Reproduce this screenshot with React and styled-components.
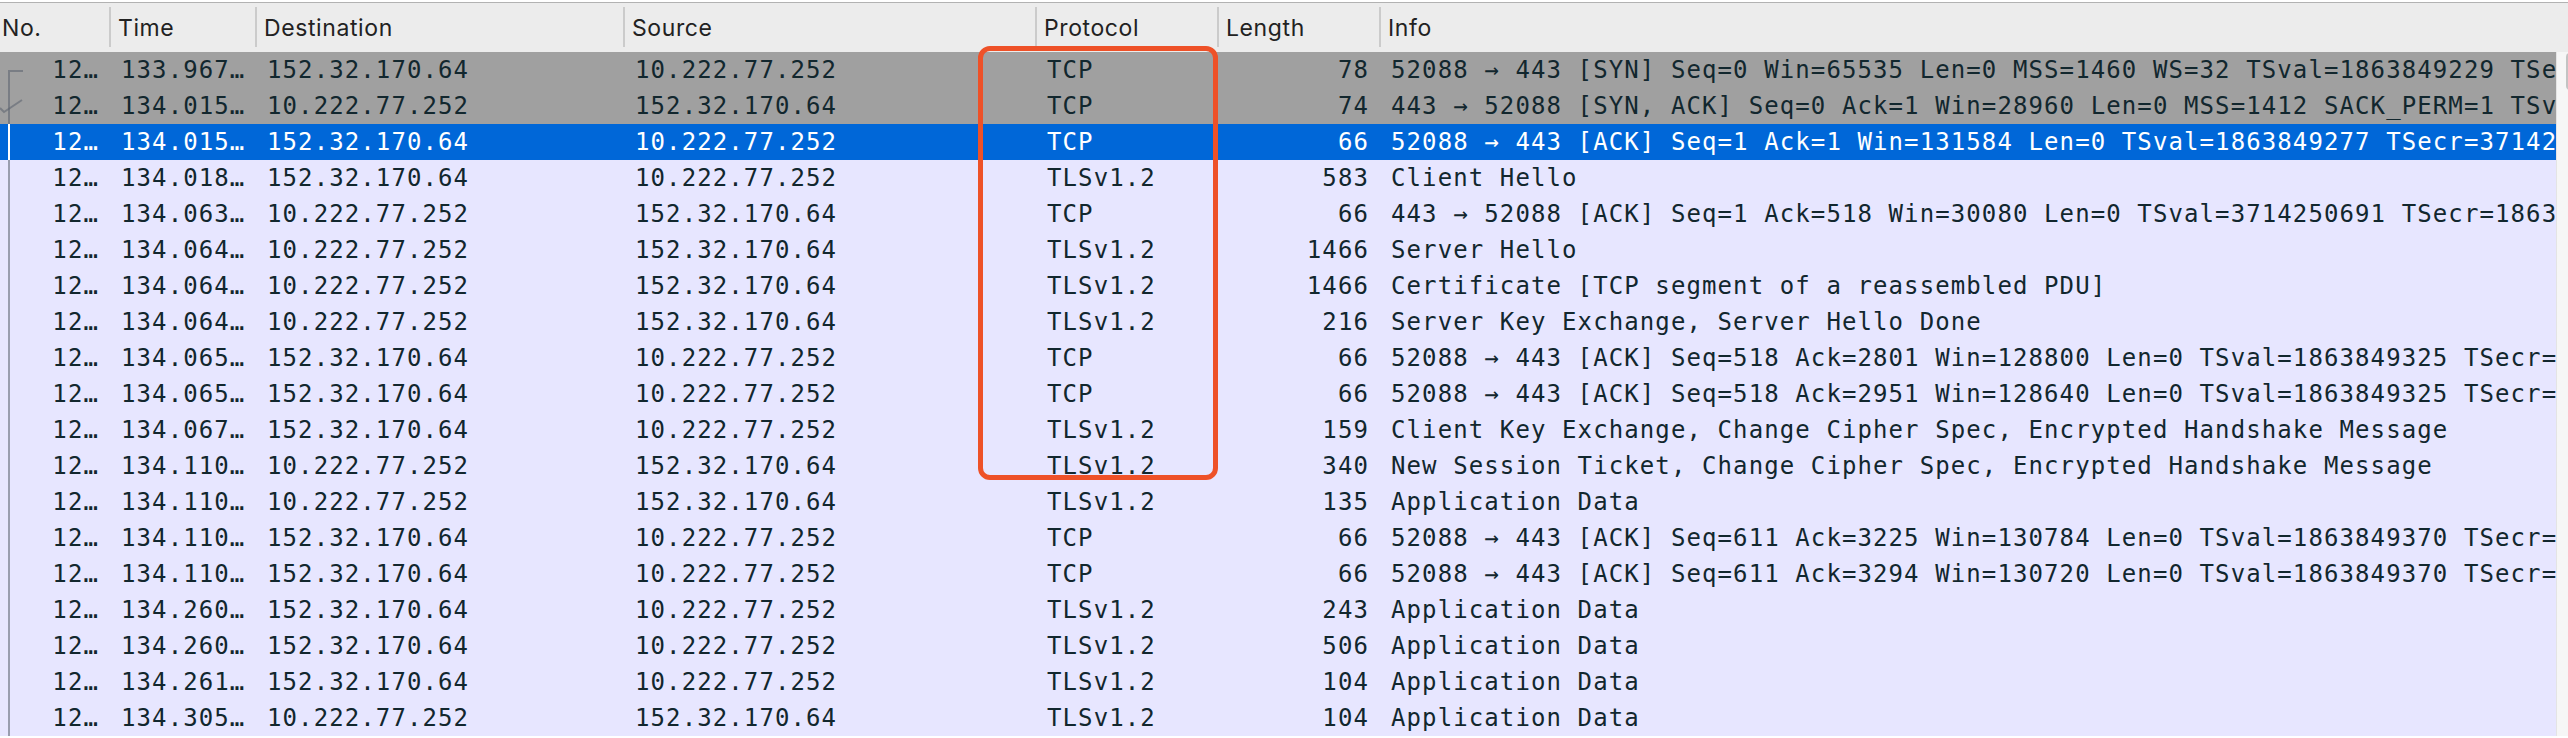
import React from 'react';
import styled, { createGlobalStyle } from 'styled-components';

const GlobalStyle = createGlobalStyle`
  html, body {
    margin: 0;
    padding: 0;
    background: #ffffff;
  }
`;

const COLUMNS = '109px 146px 368px 412px 182px 162px 1fr';

const Frame = styled.div`
  position: relative;
  width: 2568px;
  height: 738px;
  overflow: hidden;
  padding-top: 2px;
  box-sizing: border-box;
  background: #ffffff;
`;

const Header = styled.div`
  display: grid;
  grid-template-columns: ${COLUMNS};
  height: 49px;
  background: #ececec;
  border-top: 1px solid #b2b2b2;
  font-family: Inter, "Liberation Sans", sans-serif;
  font-size: 23px;
  letter-spacing: 0.6px;
  color: #222222;
`;

const HeaderCell = styled.div`
  position: relative;
  display: flex;
  align-items: center;
  padding-left: ${(p) => (p.$first ? '2px' : '9px')};
  white-space: nowrap;
  overflow: hidden;

  &::before {
    content: '';
    display: ${(p) => (p.$first ? 'none' : 'block')};
    position: absolute;
    left: 0;
    top: 4px;
    bottom: 5px;
    width: 2px;
    background: #cbcbcb;
  }
`;

const Body = styled.div`
  display: flex;
`;

const RowList = styled.div`
  flex: 1;
  min-width: 0;
`;

const ROW_BG = {
  marked: '#a0a0a0',
  selected: '#0067d8',
  tcp: '#e7e6ff',
};

const Row = styled.div`
  display: grid;
  grid-template-columns: ${COLUMNS};
  height: 36px;
  background: ${(p) => ROW_BG[p.$kind]};
  color: ${(p) => (p.$kind === 'selected' ? '#ffffff' : '#12272e')};
  font-family: "DejaVu Sans Mono", "Liberation Mono", monospace;
  font-size: 24px;
  letter-spacing: 1.1px;
  line-height: 36px;
`;

const Cell = styled.div`
  position: relative;
  white-space: nowrap;
  overflow: hidden;
  text-overflow: clip;
  text-align: ${(p) => (p.$right ? 'right' : 'left')};
  padding: ${(p) => (p.$right ? '0 10px 0 0' : '0 0 0 12px')};
`;

const RelatedMark = styled.svg`
  position: absolute;
  left: 0;
  top: 0;
  width: 28px;
  height: 36px;
`;

const ScrollTrack = styled.div`
  width: 12px;
  flex: none;
  background: #f6f6f6;
  border-left: 1px solid #e4e4e4;
  box-sizing: border-box;
  padding: 1px 0 0 9px;
`;

const ScrollThumb = styled.div`
  width: 8px;
  height: 37px;
  border-radius: 4px;
  background: #c3c3c3;
`;

const Highlight = styled.div`
  position: absolute;
  left: 978px;
  top: 46px;
  width: 240px;
  height: 434px;
  box-sizing: border-box;
  border: 5px solid #ee5128;
  border-radius: 12px;
  pointer-events: none;
`;

const headers = ['No.', 'Time', 'Destination', 'Source', 'Protocol', 'Length', 'Info'];

const A = '152.32.170.64';
const B = '10.222.77.252';

const packets = [
  { time: '133.967…', dst: A, src: B, proto: 'TCP', len: 78, kind: 'marked', mark: 'first',
    info: '52088 → 443 [SYN] Seq=0 Win=65535 Len=0 MSS=1460 WS=32 TSval=1863849229 TSecr=0 SACK_PERM=1' },
  { time: '134.015…', dst: B, src: A, proto: 'TCP', len: 74, kind: 'marked', mark: 'ack',
    info: '443 → 52088 [SYN, ACK] Seq=0 Ack=1 Win=28960 Len=0 MSS=1412 SACK_PERM=1 TSval=3714250643 TSecr=1863849229 WS=128' },
  { time: '134.015…', dst: A, src: B, proto: 'TCP', len: 66, kind: 'selected', mark: 'line',
    info: '52088 → 443 [ACK] Seq=1 Ack=1 Win=131584 Len=0 TSval=1863849277 TSecr=3714250643' },
  { time: '134.018…', dst: A, src: B, proto: 'TLSv1.2', len: 583, info: 'Client Hello' },
  { time: '134.063…', dst: B, src: A, proto: 'TCP', len: 66,
    info: '443 → 52088 [ACK] Seq=1 Ack=518 Win=30080 Len=0 TSval=3714250691 TSecr=1863849277' },
  { time: '134.064…', dst: B, src: A, proto: 'TLSv1.2', len: 1466, info: 'Server Hello' },
  { time: '134.064…', dst: B, src: A, proto: 'TLSv1.2', len: 1466, info: 'Certificate [TCP segment of a reassembled PDU]' },
  { time: '134.064…', dst: B, src: A, proto: 'TLSv1.2', len: 216, info: 'Server Key Exchange, Server Hello Done' },
  { time: '134.065…', dst: A, src: B, proto: 'TCP', len: 66,
    info: '52088 → 443 [ACK] Seq=518 Ack=2801 Win=128800 Len=0 TSval=1863849325 TSecr=3714250691' },
  { time: '134.065…', dst: A, src: B, proto: 'TCP', len: 66,
    info: '52088 → 443 [ACK] Seq=518 Ack=2951 Win=128640 Len=0 TSval=1863849325 TSecr=3714250691' },
  { time: '134.067…', dst: A, src: B, proto: 'TLSv1.2', len: 159,
    info: 'Client Key Exchange, Change Cipher Spec, Encrypted Handshake Message' },
  { time: '134.110…', dst: B, src: A, proto: 'TLSv1.2', len: 340,
    info: 'New Session Ticket, Change Cipher Spec, Encrypted Handshake Message' },
  { time: '134.110…', dst: B, src: A, proto: 'TLSv1.2', len: 135, info: 'Application Data' },
  { time: '134.110…', dst: A, src: B, proto: 'TCP', len: 66,
    info: '52088 → 443 [ACK] Seq=611 Ack=3225 Win=130784 Len=0 TSval=1863849370 TSecr=3714250735' },
  { time: '134.110…', dst: A, src: B, proto: 'TCP', len: 66,
    info: '52088 → 443 [ACK] Seq=611 Ack=3294 Win=130720 Len=0 TSval=1863849370 TSecr=3714250735' },
  { time: '134.260…', dst: A, src: B, proto: 'TLSv1.2', len: 243, info: 'Application Data' },
  { time: '134.260…', dst: A, src: B, proto: 'TLSv1.2', len: 506, info: 'Application Data' },
  { time: '134.261…', dst: A, src: B, proto: 'TLSv1.2', len: 104, info: 'Application Data' },
  { time: '134.305…', dst: B, src: A, proto: 'TLSv1.2', len: 104, info: 'Application Data' },
];

// conversation line drawn in the No. column
const Mark = ({ type, selected }) => {
  const stroke = selected ? '#ffffff' : 'rgba(90, 96, 110, 0.55)';
  return (
    <RelatedMark viewBox="0 0 28 36">
      {type === 'first' && (
        <polyline points="23,19 9,19 9,36" fill="none" stroke={stroke} strokeWidth="2" />
      )}
      {type === 'ack' && (
        <>
          <line x1="9" y1="0" x2="9" y2="36" stroke={stroke} strokeWidth="2" />
          <polyline points="0,20 4,24 22,12" fill="none" stroke={stroke} strokeWidth="2" />
        </>
      )}
      {type === 'line' && <line x1="9" y1="0" x2="9" y2="36" stroke={stroke} strokeWidth="2" />}
    </RelatedMark>
  );
};

const App = () => {
  return (
    <>
      <GlobalStyle />
      <Frame>
        <Header>
          {headers.map((h, i) => (
            <HeaderCell key={h} $first={i === 0}>{h}</HeaderCell>
          ))}
        </Header>
        <Body>
          <RowList>
            {packets.map((p, i) => {
              const kind = p.kind || 'tcp';
              return (
                <Row key={i} $kind={kind}>
                  <Cell $right>
                    <Mark type={p.mark || 'line'} selected={kind === 'selected'} />
                    12…
                  </Cell>
                  <Cell>{p.time}</Cell>
                  <Cell>{p.dst}</Cell>
                  <Cell>{p.src}</Cell>
                  <Cell>{p.proto}</Cell>
                  <Cell $right>{p.len}</Cell>
                  <Cell>{p.info}</Cell>
                </Row>
              );
            })}
          </RowList>
          <ScrollTrack>
            <ScrollThumb />
          </ScrollTrack>
        </Body>
        <Highlight />
      </Frame>
    </>
  );
};

export default App;
